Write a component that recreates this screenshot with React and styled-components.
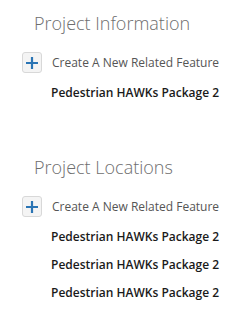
import React from 'react'
import styled, { createGlobalStyle } from 'styled-components'

const GlobalStyle = createGlobalStyle`
  body {
    margin: 0;
    background: #fff;
    font-family: "Open Sans", "Noto Sans", sans-serif;
  }
`

const sections = [
  { title: 'Project Information', items: ['Pedestrian HAWKs Package 2'] },
  {
    title: 'Project Locations',
    items: [
      'Pedestrian HAWKs Package 2',
      'Pedestrian HAWKs Package 2',
      'Pedestrian HAWKs Package 2',
    ],
  },
]

const App = () => {
  return (
    <Page>
      <GlobalStyle />
      {sections.map((s) => (
        <Section key={s.title}>
          <Heading>{s.title}</Heading>
          <AddRow>
            <AddButton>
              <svg width="12" height="12" viewBox="0 0 12 12">
                <path d="M6 0v12M0 6h12" stroke="#2a74b4" strokeWidth="2.2" />
              </svg>
            </AddButton>
            <AddLabel>Create A New Related Feature</AddLabel>
          </AddRow>
          <List>
            {s.items.map((item, i) => (
              <Item key={i}>{item}</Item>
            ))}
          </List>
        </Section>
      ))}
    </Page>
  )
}

export default App

const Page = styled.div`
  width: 246px;
  height: 321px;
  padding-top: 11px;
  box-sizing: border-box;
`

const Section = styled.div`
  margin-bottom: 43px;
`

const Heading = styled.h2`
  margin: 0 0 0 34px;
  font-size: 18px;
  font-weight: 300;
  color: #6e6e6e;
  line-height: 24px;
`

const AddRow = styled.div`
  display: flex;
  align-items: center;
  margin: 17px 0 0 22px;
  height: 21px;
`

const AddButton = styled.div`
  width: 18px;
  height: 19px;
  display: flex;
  align-items: center;
  justify-content: center;
  background: #f4f4f4;
  border: 1px solid #d8d8d8;
  border-radius: 3px;
`

const AddLabel = styled.span`
  margin-left: 10px;
  font-size: 12px;
  color: #555;
`

const List = styled.div`
  display: flex;
  flex-direction: column;
  padding-left: 51px;
  margin-top: 11px;
`

const Item = styled.div`
  height: 28px;
  line-height: 18px;
  font-size: 12px;
  font-weight: 600;
  color: #1a1a1a;
`
